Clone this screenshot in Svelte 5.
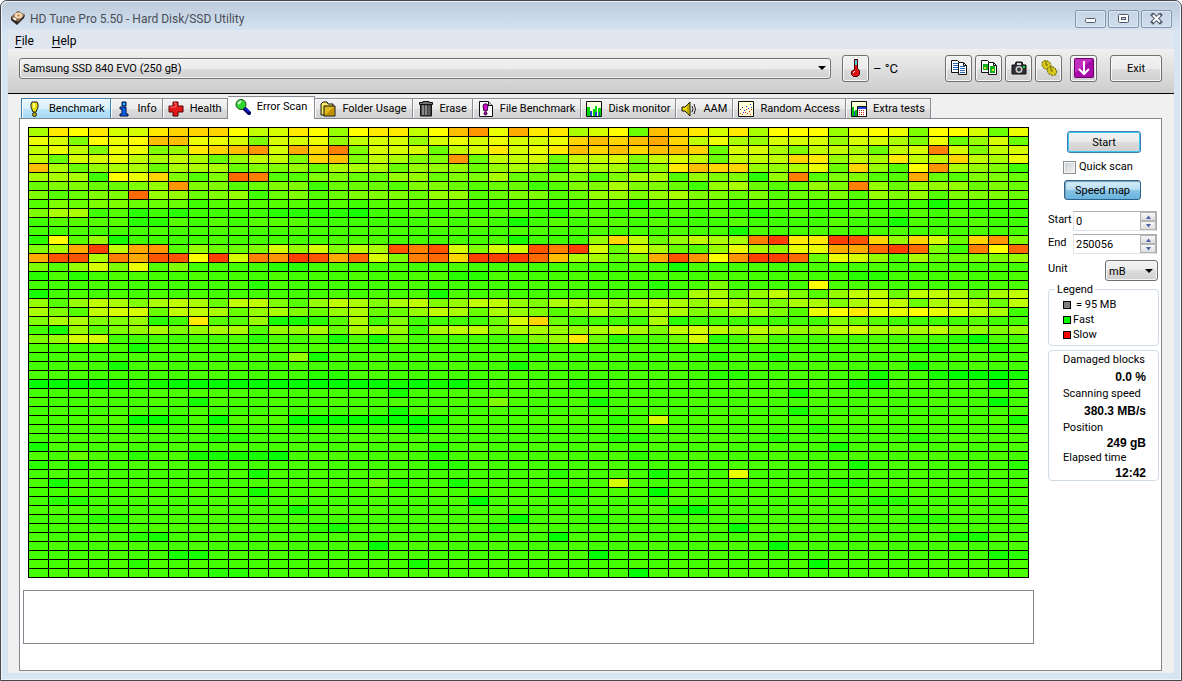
<script lang="ts">
	type Tab = { id: string; label: string };

	const tabs: Tab[] = [
		{ id: 'benchmark', label: 'Benchmark' },
		{ id: 'info', label: 'Info' },
		{ id: 'health', label: 'Health' },
		{ id: 'scan', label: 'Error Scan' },
		{ id: 'folder', label: 'Folder Usage' },
		{ id: 'erase', label: 'Erase' },
		{ id: 'file', label: 'File Benchmark' },
		{ id: 'monitor', label: 'Disk monitor' },
		{ id: 'aam', label: 'AAM' },
		{ id: 'random', label: 'Random Access' },
		{ id: 'extra', label: 'Extra tests' }
	];

	const stats = [
		{ label: 'Damaged blocks', value: '0.0 %' },
		{ label: 'Scanning speed', value: '380.3 MB/s' },
		{ label: 'Position', value: '249 gB', compact: true },
		{ label: 'Elapsed time', value: '12:42', compact: true }
	];

	const legend = [
		{ color: '#808080', text: '= 95 MB' },
		{ color: '#00ff00', text: 'Fast' },
		{ color: '#ff0000', text: 'Slow' }
	];

	const COLS = 50;
	const ROWS = 50;

	// one letter per block, a = fastest, v = slowest, a dot = typical speed
	const busyRows = [
		'inmnkknooomjknmhmnnjmprlqnnikmfponknimmmhlmlgmmkfl',
		'lkgmlmppllkgkklhjkkhklklkklopopqojlihkkkhkkiglfhkf',
		'jljgllghnoprkqosgkkkfjknklnpopoppofkkigjjifjkskgjk',
		'jfkkljijifhjjgopgjiggrfjjkfjjkgjkjfjjjonhjinjjojil',
		'pifhiifiiifgghfiiifhhhfhiheiiifhnpoohhilfohemrihgd',
		'iiidmlogegtseeggffhhfggiffggegiiehggchseggeeqfeggf',
		'fggffghrggefggdfffeggfeffdeggiggfdhifefhgshfhhhfgf',
		'gefggthhfghdfgefgggfhhefggefhhghiggfgeffgehghegggf',
		'egfggfffdeeeeededeeeeeddddddeeceeeedeedddddddbdddd',
		'giidecdcddddccccbddededeedceededededcdedde.dededdd',
		'deeeeccededeeeddddddededbdedeededddeddddeddb.d.edd',
		'...................................b..............',
		'cmehbdddd...............bdddhojfhjiisvnnvuohokforg',
		'giqvjqrehffgkhkgjiusukgkkusvkfkifehlihllqqtvtgdsmt',
		'quuisquumvksrvuqtkgstovvvtpiifgqurmrvvtflkheiffggh',
		'gehkgleg....cc..................b.................',
		'c.c..................cc..................cc.......',
		'...........c...................c..g....m..........',
		'b...................b............iifhjgehjjfjjifij',
		'hehjigijifjjgehjigijghjjhgiiihijihjiggiigikjfijifj',
		'igejkkfjjifhigfhiffhjifihgegiggiiggiigelmnllmlkjid',
		'giigghcdneehbbceidgddddfkofddddicdddddddgfedddded.',
		'dbheghighiiehhifiihdijjgiihhijigjkjijihhjkiiijhhgh',
		'ghkk...d...c...b.bf......ghnfc..fkc.g.........ca..'
	];

	// calm part of the disk: row -> "column shade"
	const calmRows: Record<number, string> = {
		24: '5b 25c 44c 45c 48c',
		25: '13h 14b 34c 37c',
		26: '4b 24b 44b',
		27: '14c 15c 34c 35c 42b 45b 46a 47a 48a 49b',
		28: '0a 1a 2a 3a 4b 5c 6b 7a 8a 9a 10a 11a 12a 13a 14a 15a 16a 17a 18b 19a 20b 21a 22c 27c 28c 41b 42b 48a',
		29: '18b 38b',
		30: '8b 23g 28b 48a',
		31: '18b 38b',
		32: '5a 6a 7c 9a 13a 14a 15a 16a 17a 18a 19a 20b 29c 31k 49b',
		33: '19b 39c',
		34: '9c 10c 29c 30c 37c 44c',
		35: '0b 20c 40b',
		36: '2f 5c 8b 9b 10b 11b 12a 20c 30c',
		37: '0c 2c 20c 21c 41b 49c',
		38: '11b 26c 31b 35l',
		39: '1b 17f 18c 21b 29k 40c 41c',
		40: '11b 26c 27c 31a',
		41: '1c 2c 22a 42c 43c',
		42: '13b 32b 33a',
		43: '3c 4c 24a 28c 44c 45c',
		44: '14c 15b 23c 35a',
		45: '5c 6b 26a 46b 47b',
		46: '17a 37a',
		47: '7b 8b 28a 48b 49c',
		48: '5c 19b 39a',
		49: '9c 10c 30a'
	};

	function typical(row: number, col: number) {
		return (row * 7 + col * 13 + ((row * col) % 5)) % 3 === 0 ? 102 : 104;
	}

	function shade(letter: string, row: number, col: number) {
		const hue = !letter || letter === '.' ? typical(row, col) : 120 - (letter.charCodeAt(0) - 97) * 5;
		return `hsl(${hue} 100% 50%)`;
	}

	function buildBlocks() {
		const out: string[] = [];
		for (let row = 0; row < ROWS; row++) {
			let line = (busyRows[row] ?? '').padEnd(COLS, '.').slice(0, COLS).split('');
			for (const spot of (calmRows[row] ?? '').split(' ')) {
				if (spot) line[parseInt(spot)] = spot.slice(-1);
			}
			line.forEach((letter, col) => out.push(shade(letter, row, col)));
		}
		return out;
	}

	const blocks = buildBlocks();

	let active = $state('scan');
	let quick = $state(false);
	let speedMap = $state(true);
	let start = $state(0);
	let end = $state(250056);
</script>

{#snippet tabIcon(id: string)}
	<svg class="tab-icon" width="16" height="16" viewBox="0 0 16 16" aria-hidden="true">
		{#if id === 'benchmark'}
			<path d="M5 1h5l1 2v3l-2 5H6L4 6V3z" fill="#e8e000" stroke="#222" />
			<path d="M6 2h2v5H6z" fill="#ffff90" />
			<circle cx="7.500" cy="13.500" r="2" fill="#b8b000" stroke="#222" />
		{:else if id === 'info'}
			<path d="M6 1h4v4H6zM4 6h6v7h2v2H4v-2h2V8H4z" fill="#0a60f0" stroke="#001040" />
			<path d="M7 2h2v2H7z" fill="#30c8ff" />
		{:else if id === 'health'}
			<path d="M5 1h5v4h5v6h-5v4H5v-4H1V5h4z" fill="#e01818" stroke="#500" />
			<path d="M6 2h2v4H2" fill="none" stroke="#ff7070" />
		{:else if id === 'scan'}
			<path d="M9 9l5 5" stroke="#000060" stroke-width="4" stroke-linecap="round" />
			<path d="M10 9l4 4" stroke="#1020d0" stroke-width="2" />
			<circle cx="6" cy="5.500" r="5" fill="#30d830" stroke="#184818" />
			<path d="M3 5l3-3" stroke="#d0ffd0" stroke-width="2" />
		{:else if id === 'folder'}
			<path d="M1 3l2-2h4l1 2h5v11H1z" fill="#f8e860" stroke="#111" />
			<path d="M4 5h11v10H4z" fill="#e0b820" stroke="#111" />
			<path d="M5 14l9-8v8z" fill="#c09000" />
		{:else if id === 'erase'}
			<path d="M2.500 4h11v11h-11z" fill="#444" stroke="#111" />
			<path d="M5 4v10M8 4v10" stroke="#ccc" />
			<path d="M11 4v10" stroke="#777" />
			<path d="M1.500 1.500H5v-1h6v1h3.500v2h-13z" fill="#777" stroke="#111" />
		{:else if id === 'file'}
			<path d="M1.500.5h9l4 4v11h-13z" fill="#fff" stroke="#111" />
			<path d="M10.500.5v4h4" fill="#ccc" stroke="#111" />
			<path d="M6 3h3l1 2-1 5H6L5 5z" fill="#d010d0" stroke="#303" />
			<circle cx="7.500" cy="12.500" r="1.500" fill="#a0a" stroke="#303" />
		{:else if id === 'monitor'}
			<path d="M.5.5h15v15H.5z" fill="#ffffe0" stroke="#111" />
			<path d="M1 6h3v9H1zM7 8h2V5h2v10H7zM12 7h3v8h-3z" fill="#00d800" />
			<path d="M4 10h2v5H4zM9 11h2v4H9zM13 11h1v4h-1z" fill="#2040d0" />
		{:else if id === 'aam'}
			<path d="M1 6h3l5-5v14l-5-5H1z" fill="#f0dc00" stroke="#111" />
			<path d="M7 3v10" stroke="#907800" />
			<path d="M11 5q2 3 0 6M13 3q3 5 0 10" fill="none" stroke="#222" />
		{:else if id === 'random'}
			<path d="M.5.5h15v15H.5z" fill="#ffffd8" stroke="#111" />
			<path d="M2 8h1v1H2zM4 6h1v1H4zM6 9h1v1H6zM8 5h1v1H8zM10 7h1v1h-1zM12 3h1v1h-1zM13 6h1v1h-1zM5 11h1v1H5z" fill="#2030e0" />
			<path d="M2 12h1v1H2zM4 13h1v1H4zM7 11h1v1H7zM9 12h1v1H9zM11 10h1v1h-1zM13 8h1v1h-1zM8 8h1v1H8zM12 13h1v1h-1z" fill="#e02020" />
		{:else}
			<path d="M.5.5h15v15H.5z" fill="#ffffd8" stroke="#111" />
			<path d="M1 6h2v9H1zM4 9h2v6H4z" fill="#00c800" />
			<path d="M3 10h1v5H3z" fill="#2040e0" />
			<path d="M6.500 5.500h9v10h-9z" fill="#fff" stroke="#111" />
			<path d="M7 6h8v2H7z" fill="#2040e0" />
			<path d="M8 9h1v1H8zM10 9h1v1h-1zM12 9h1v1h-1zM8 11h1v1H8zM10 11h1v1h-1zM12 11h1v1h-1zM8 13h1v1H8zM10 13h1v1h-1zM12 13h1v1h-1z" fill="#d02020" />
		{/if}
	</svg>
{/snippet}

{#snippet spinner(name: string, up: () => void, down: () => void)}
	<span class="spin">
		<button type="button" aria-label="Increase {name}" onclick={up}>
			<svg width="7" height="4" viewBox="0 0 7 4"><path d="M1 4l2.500-3.500L6 4z" fill="#4a62a8" /></svg>
		</button>
		<button type="button" aria-label="Decrease {name}" onclick={down}>
			<svg width="7" height="4" viewBox="0 0 7 4"><path d="M1 0l2.500 3.500L6 0z" fill="#4a62a8" /></svg>
		</button>
	</span>
{/snippet}

<div class="window">
	<header class="titlebar">
		<svg width="16" height="16" viewBox="0 0 16 16" aria-hidden="true">
			<path d="M1 7l7-6 7 4-1 3-7 7-6-5z" fill="#2c2420" />
			<path d="M1 7l7-6 7 4-7 7z" fill="#8a6a50" />
			<ellipse cx="8.500" cy="5.500" rx="4" ry="3" fill="#f4d8b0" />
			<circle cx="8.500" cy="5.500" r="1" fill="#a06828" />
			<path d="M3 8l3 2" stroke="#fff" stroke-width="2" />
		</svg>
		<h1>HD Tune Pro 5.50 - Hard Disk/SSD Utility</h1>
		<div class="caption">
			<button type="button" aria-label="Minimize">
				<svg width="14" height="12" viewBox="0 0 14 12"><rect x="1.500" y="5.500" width="10" height="4" rx="1" fill="#fff" stroke="#50586c" /></svg>
			</button>
			<button type="button" aria-label="Maximize">
				<svg width="14" height="12" viewBox="0 0 14 12">
					<rect x="1.500" y="1.500" width="10" height="8" rx="1" fill="#fff" stroke="#50586c" />
					<rect x="4.500" y="4.500" width="4" height="2" fill="#c8d4e4" stroke="#50586c" />
				</svg>
			</button>
			<button type="button" aria-label="Close">
				<svg width="14" height="12" viewBox="0 0 14 12">
					<path d="M3 2l7 7M10 2l-7 7" stroke="#50586c" stroke-width="4" stroke-linecap="square" />
					<path d="M3 2l7 7M10 2l-7 7" stroke="#fff" stroke-width="2" />
				</svg>
			</button>
		</div>
	</header>

	<nav class="menu">
		<button type="button"><u>F</u>ile</button>
		<button type="button"><u>H</u>elp</button>
	</nav>

	<div class="toolbar">
		<span class="select drive">
			<select aria-label="Drive">
				<option>Samsung SSD 840 EVO (250 gB)</option>
			</select>
		</span>
		<button type="button" class="btn icon" aria-label="Temperature">
			<svg width="18" height="18" viewBox="0 0 18 18">
				<path d="M7.500.5h3v9l2 2v4l-2 2h-4l-2-2v-3l3-2z" fill="#e01010" stroke="#400" />
				<path d="M8 1h2v5H8z" fill="#50d0e0" />
				<path d="M6 14l2-2" stroke="#fff" />
			</svg>
		</button>
		<span class="temp">– °C</span>
		<div class="tools">
			<button type="button" class="btn icon" aria-label="Copy text">
				<svg width="18" height="18" viewBox="0 0 18 18">
					<path d="M1.500 1.500h6l2 2v10h-8z" fill="#fff" stroke="#111" />
					<path d="M3 4.500h5M3 6.500h5M3 8.500h5M3 10.500h5" stroke="#2868c0" />
					<path d="M8.500 3.500h5l3 3v9h-8z" fill="#fff" stroke="#111" />
					<path d="M13.500 3.500v3h3" fill="none" stroke="#111" />
					<path d="M10 7.500h5M10 9.500h5M10 11.500h5M10 13.500h5" stroke="#2868c0" />
				</svg>
			</button>
			<button type="button" class="btn icon" aria-label="Copy screenshot">
				<svg width="18" height="18" viewBox="0 0 18 18">
					<path d="M1.500 1.500h6l2 2v10h-8z" fill="#fff" stroke="#111" />
					<path d="M3 5h5v6H3z" fill="#10b020" />
					<path d="M8.500 3.500h5l3 3v9h-8z" fill="#fff" stroke="#111" />
					<path d="M13.500 3.500v3h3" fill="none" stroke="#111" />
					<path d="M10 7h5v7h-5z" fill="#10b020" />
					<path d="M4 8h2v2H4zM12 10h2v2h-2z" fill="#e0e020" />
				</svg>
			</button>
			<button type="button" class="btn icon" aria-label="Save screenshot">
				<svg width="18" height="18" viewBox="0 0 18 18">
					<path d="M2 6h3l1-3h6l1 3h3v9H2z" fill="#2c3034" stroke="#111" />
					<path d="M7 4h4v2H7z" fill="#ddd" />
					<circle cx="9" cy="10.500" r="3.500" fill="#c8cccc" />
					<circle cx="9" cy="10.500" r="2" fill="#333" />
					<path d="M13 7h2v2h-2z" fill="#20e040" />
				</svg>
			</button>
			<button type="button" class="btn icon" aria-label="Options">
				<svg width="18" height="18" viewBox="0 0 18 18">
					<ellipse cx="6.500" cy="6" rx="5" ry="4" transform="rotate(40 6.500 6)" fill="#d8c820" stroke="#6c6400" stroke-dasharray="2 1" />
					<ellipse cx="12" cy="12" rx="5" ry="4" transform="rotate(40 12 12)" fill="#d8c820" stroke="#6c6400" stroke-dasharray="2 1" />
					<path d="M6 2v4h2M11 8v4h2" fill="none" stroke="#6c6400" />
				</svg>
			</button>
		</div>
		<button type="button" class="btn icon save" aria-label="Save">
			<svg width="20" height="20" viewBox="0 0 20 20">
				<rect x=".5" y=".5" width="19" height="19" rx="1" fill="#a80ca8" stroke="#6c006c" />
				<path d="M1 1h18L1 15z" fill="#d048d0" opacity=".6" />
				<path d="M10 3v13M5 11l5 5 5-5" fill="none" stroke="#fff" stroke-width="2" />
			</svg>
		</button>
		<button type="button" class="btn exit">Exit</button>
	</div>

	<main class="client">
		<div class="tabs" role="tablist">
			{#each tabs as tab (tab.id)}
				<button
					type="button"
					role="tab"
					class="tab"
					class:hot={tab.id === 'benchmark'}
					class:selected={tab.id === active}
					aria-selected={tab.id === active}
					onclick={() => (active = tab.id)}
				>
					{@render tabIcon(tab.id)}
					{tab.label}
				</button>
			{/each}
		</div>

		<div class="panel">
			<section class="results">
				<div class="map">
					{#each blocks as color}
						<i style="background:{color}"></i>
					{/each}
				</div>
				<div class="log"></div>
			</section>

			<aside class="side">
				<button type="button" class="btn start">Start</button>
				<label class="check">
					<input type="checkbox" bind:checked={quick} />
					Quick scan
				</label>
				<button type="button" class="btn speed" class:on={speedMap} onclick={() => (speedMap = !speedMap)}>
					Speed map
				</button>

				<div class="field">
					<label for="start">Start</label>
					<span class="number">
						<input id="start" type="text" bind:value={start} />
						{@render spinner('start', () => start++, () => start--)}
					</span>
				</div>
				<div class="field">
					<label for="end">End</label>
					<span class="number">
						<input id="end" type="text" bind:value={end} />
						{@render spinner('end', () => end++, () => end--)}
					</span>
				</div>
				<div class="field unit">
					<label for="unit">Unit</label>
					<span class="select">
						<select id="unit">
							<option>mB</option>
							<option>gB</option>
						</select>
					</span>
				</div>

				<fieldset class="legend">
					<legend>Legend</legend>
					<ul>
						{#each legend as item}
							<li><span class="swatch" style="background:{item.color}"></span>{item.text}</li>
						{/each}
					</ul>
				</fieldset>

				<dl class="stats">
					{#each stats as stat}
						<div class:compact={stat.compact}>
							<dt>{stat.label}</dt>
							<dd>{stat.value}</dd>
						</div>
					{/each}
				</dl>
			</aside>
		</div>
	</main>
</div>

<style>
	:global(body) {
		margin: 0;
		background: #fff;
	}

	.window {
		box-sizing: border-box;
		min-height: 100vh;
		display: flex;
		flex-direction: column;
		padding: 0 7px 7px;
		border: 1px solid #46484c;
		border-radius: 7px 7px 0 0;
		background: #d7e4f2;
		box-shadow: inset 0 0 0 1px #eef5fb;
		font: 11px/14px Roboto, 'Liberation Sans', sans-serif;
		color: #000;
	}

	button,
	input,
	select {
		box-sizing: border-box;
		margin: 0;
		font: inherit;
		color: inherit;
	}

	svg {
		display: block;
		flex-shrink: 0;
	}

	.titlebar {
		display: flex;
		align-items: center;
		gap: 4px;
		height: 29px;
		margin: 0 -6px;
		padding: 0 8px;
		border-radius: 6px 6px 0 0;
		background: linear-gradient(#bccad9, #d4e2f1);
		box-shadow: inset 0 1px #e8f0f8;
	}

	.titlebar svg {
		margin-top: 4px;
	}

	h1 {
		flex: 1;
		margin: 6px 0 0;
		font-size: 12px;
		font-weight: normal;
		line-height: 16px;
		color: #4a4e58;
	}

	.caption {
		display: flex;
		gap: 2px;
		padding-top: 6px;
	}

	.caption button {
		display: flex;
		align-items: center;
		justify-content: center;
		width: 31px;
		height: 18px;
		padding: 0;
		border: 1px solid #8593ab;
		border-radius: 2px;
		background: linear-gradient(#c6d4e4, #cfddec);
		box-shadow: inset 0 0 0 1px #dce8f4;
	}

	.caption svg {
		margin: 0;
	}

	.menu {
		display: flex;
		gap: 18px;
		height: 19px;
		padding: 0 7px;
		background: #dfe6ef;
	}

	.menu button {
		padding: 2px 0 0;
		border: 0;
		background: none;
		font-size: 12px;
		line-height: 16px;
	}

	.menu u {
		text-underline-offset: 2px;
	}

	.toolbar {
		display: flex;
		align-items: center;
		height: 45px;
		box-sizing: border-box;
		padding: 0 12px 6px 11px;
		border-bottom: 1px solid #000;
		background: linear-gradient(#f0f0f0, #cccccc);
	}

	.select {
		position: relative;
		display: block;
	}

	.select::after {
		content: '';
		position: absolute;
		right: 5px;
		top: 50%;
		margin-top: -2px;
		border: 4px solid transparent;
		border-top-color: #000;
		border-bottom: 0;
		pointer-events: none;
	}

	.select select {
		display: block;
		width: 100%;
		height: 21px;
		padding: 2px 3px 0;
		appearance: none;
		border: 1px solid #707070;
		border-radius: 3px;
		background: linear-gradient(#f2f2f2, #ebebeb 50%, #dddddd 50%, #cfcfcf);
		box-shadow: inset 0 0 0 1px #f6f6f6;
	}

	.drive {
		flex: 1;
		margin-right: 11px;
	}

	.btn {
		display: flex;
		align-items: center;
		justify-content: center;
		padding: 1px 0 0;
		border: 1px solid #707070;
		border-radius: 3px;
		background: linear-gradient(#f2f2f2, #ebebeb 50%, #dddddd 50%, #cfcfcf);
		box-shadow: inset 0 0 0 1px #f8f8f8;
	}

	.icon {
		width: 27px;
		height: 27px;
		padding: 0;
	}

	.temp {
		width: 72px;
		padding: 2px 0 0 4px;
		font-size: 13px;
	}

	.tools {
		display: flex;
		gap: 3px;
	}

	.save {
		margin: 0 13px 0 8px;
	}

	.exit {
		width: 52px;
		height: 27px;
	}

	.client {
		flex: 1;
		display: flex;
		flex-direction: column;
		padding: 2px 12px 2px 11px;
		background: #f0f0f0;
	}

	.tabs {
		display: flex;
		align-items: flex-end;
		padding-left: 2px;
	}

	.tab {
		display: flex;
		align-items: center;
		gap: 6px;
		height: 20px;
		padding: 1px 5px 0;
		border: 1px solid #8a8c94;
		border-width: 1px 1px 0 0;
		background: linear-gradient(#f3f3f3, #ebebeb 50%, #dddddd 50%, #d2d2d2);
		box-shadow: inset 1px 1px #fafafa;
		white-space: nowrap;
	}

	.tab.hot {
		border-color: #3c7fb1;
		border-left-width: 1px;
		background: linear-gradient(#eaf6fd, #d9f0fc 50%, #bee6fd 50%, #a7d9f5);
	}

	.tab.selected {
		height: 23px;
		margin-bottom: -1px;
		padding: 0 7px 3px;
		background: #fff;
		z-index: 1;
	}

	.panel {
		flex: 1;
		display: flex;
		gap: 14px;
		padding: 8px 2px 8px 3px;
		border: 1px solid #828790;
		background: #fff;
	}

	.results {
		flex: 1;
		min-width: 0;
	}

	.map {
		display: grid;
		grid-template-columns: repeat(50, 1fr);
		grid-auto-rows: 8px;
		gap: 1px;
		margin: 0 5px 12px;
		padding: 1px;
		background: #000;
	}

	.log {
		height: 52px;
		border: 1px solid #828790;
	}

	.side {
		width: 111px;
		padding-top: 4px;
	}

	.start {
		width: 74px;
		height: 22px;
		margin-left: 19px;
		border-color: #3c7fb1;
		box-shadow: inset 0 0 0 1px #38c8f4;
	}

	.check {
		display: flex;
		align-items: center;
		gap: 3px;
		margin: 7px 0 6px 15px;
	}

	.check input {
		width: 13px;
		height: 13px;
		appearance: none;
		border: 1px solid #8e8f8f;
		background: linear-gradient(135deg, #c8ccd0, #f4f4f4);
		box-shadow: inset 0 0 0 1px #f4f4f4;
	}

	.check input:checked {
		background: #2c628b;
	}

	.speed {
		width: 77px;
		height: 20px;
		margin-left: 16px;
	}

	.speed.on {
		border-color: #2c628b;
		background: linear-gradient(#d8eefa, #b4dcf2 50%, #88c4e6 50%, #68b3db);
		box-shadow: inset 1px 1px 1px #7a9eb4;
	}

	.field {
		display: flex;
		justify-content: space-between;
		margin: 3px 2px 0 0;
	}

	.speed + .field {
		margin-top: 11px;
	}

	.field label {
		padding-top: 2px;
	}

	.number {
		display: flex;
		box-sizing: border-box;
		width: 84px;
		height: 20px;
		border: 1px solid #e2e3ea;
		border-top-color: #abadb3;
		border-right-color: #abadb3;
	}

	.number input {
		flex: 1;
		min-width: 0;
		padding: 1px 2px 0;
		border: 0;
		background: none;
		outline: 0;
	}

	.spin {
		display: flex;
		flex-direction: column;
		width: 16px;
	}

	.spin button {
		flex: 1;
		display: flex;
		align-items: center;
		justify-content: center;
		padding: 0;
		border: 1px solid #b4b4b4;
		background: linear-gradient(#f6f6f6, #dedede);
	}

	.field.unit {
		margin: 6px 1px 0 0;
	}

	.unit .select {
		width: 53px;
	}

	.legend,
	.stats {
		margin: 0;
		border: 1px solid #d0dbe6;
		border-radius: 4px;
	}

	.legend {
		min-width: 0;
		margin-top: 1px;
		padding: 0 14px 3px;
	}

	legend {
		margin-left: -8px;
		padding: 1px 2px 0;
	}

	ul {
		margin: 0;
		padding: 0;
		list-style: none;
	}

	li {
		display: flex;
		align-items: center;
		gap: 2px;
		height: 15px;
		white-space: pre;
	}

	li:first-child {
		gap: 5px;
	}

	.swatch {
		width: 6px;
		height: 6px;
		border: 1px solid #000;
	}

	.stats {
		margin-top: 4px;
		padding: 1px 12px 0 14px;
	}

	dt {
		line-height: 16px;
		white-space: nowrap;
	}

	dd {
		margin: 0;
		font-family: 'Liberation Sans', Arial, sans-serif;
		font-size: 12px;
		font-weight: bold;
		line-height: 18px;
		text-align: right;
	}

	.compact dd {
		line-height: 14px;
	}
</style>
